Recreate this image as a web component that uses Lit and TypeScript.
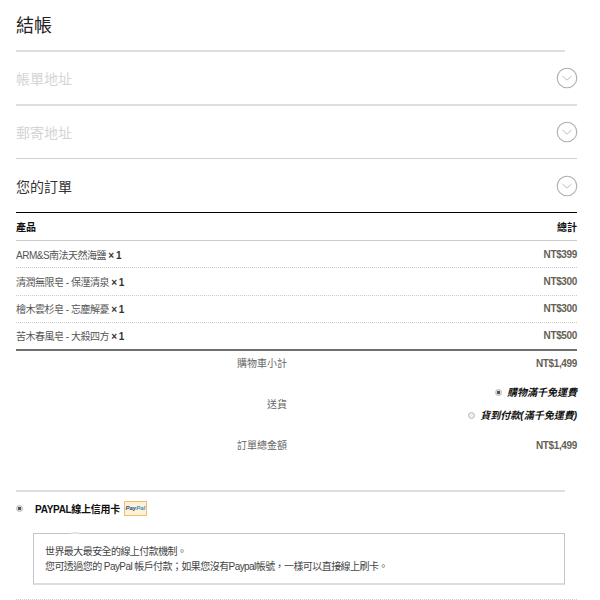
import { LitElement, html, css, svg } from "lit";
import { customElement } from "lit/decorators.js";

const chevron = html`<svg class="chev" width="22" height="22" viewBox="0 0 22 22" fill="none">
  <circle cx="11" cy="11" r="9.8" stroke="#adadad" stroke-width="1.1"></circle>
  ${svg`<path d="M6.4 9 L11 13.1 L15.6 9" stroke="#b5b5b5" stroke-width="0.9"></path>`}
</svg>`;

const items = [
  ["ARM&S南法天然海鹽", "NT$399"],
  ["清潤無限皂 - 保溼清泉", "NT$300"],
  ["檜木雲杉皂 - 忘塵解憂", "NT$300"],
  ["苦木春風皂 - 大殺四方", "NT$500"],
];

@customElement("app-root")
export class AppRoot extends LitElement {
  static styles = css`
    :host {
      display: block;
      width: 600px;
      height: 600px;
      overflow: hidden;
      background: #fff;
      font-family: "Liberation Sans", "Noto Sans CJK TC", sans-serif;
      color: #555;
    }
    .page { padding: 0 23px 0 16px; display: flex; flex-direction: column; }
    h1 { margin: 0; height: 50px; box-sizing: border-box; padding-top: 14px; font-size: 18px; line-height: 24px; font-weight: 400; color: #222; }
    .rule-short { height: 2px; background: #dedede; margin-right: 12px; }
    .sec { height: 52px; display: flex; align-items: center; justify-content: space-between; font-size: 14px; color: #d4d4d4; }
    .sec.on { height: 53px; color: #333; }
    .sec .chev { margin-right: -1px; }
    .rule { height: 2px; background: #dedede; }
    .rule.thin { height: 1px; background: #d0d0d0; }
    .head { border-top: 1px solid #000; border-bottom: 1px solid #ccc; height: 27px; display: flex; align-items: center; justify-content: space-between; font-size: 10px; font-weight: 700; color: #111; }
    .row { height: 26.3px; display: flex; align-items: center; justify-content: space-between; font-size: 10px; letter-spacing: -0.5px; color: #555; border-bottom: 1px dotted #ccc; }
    .row.last { border-bottom: 0; height: 26.1px; }
    .x { font-weight: 700; color: #333; }
    .price { font-weight: 700; color: #665f55; font-size: 10px; letter-spacing: -0.35px; }
    .thick { height: 2px; background: #6f6f6f; }
    .sum { display: grid; grid-template-columns: 271px 1fr; font-size: 10px; color: #666; }
    .sum .l { text-align: right; }
    .sum .r { text-align: right; }
    .s1 { margin-top: 6px; line-height: 13px; }
    .ship { align-items: center; margin-top: 16px; }
    .ship .r { display: flex; flex-direction: column; align-items: flex-end; gap: 10px; font-style: italic; font-weight: 700; color: #111; }
    .ship .opt { display: flex; align-items: center; gap: 5px; line-height: 13px; }
    .s3 { margin-top: 17px; line-height: 13px; }
    .radio { width: 7px; height: 7px; box-sizing: border-box; border-radius: 50%; border: 1px solid #bbb; background: #eee; flex: none; }
    .radio.sel { background: radial-gradient(circle, #555 0 1.6px, #ddd 2px); }
    .rule-pay { height: 2px; background: #dedede; margin: 38px 12px 0 0; }
    .pay { display: flex; align-items: center; height: 33px; font-size: 10px; letter-spacing: -0.3px; font-weight: 700; color: #111; }
    .pay .radio { margin-right: 12px; }
    .badge { margin-left: 4px; width: 23px; height: 15px; box-sizing: border-box; border: 1px solid #f0bd75; background: #fff2d4; display: flex; align-items: center; justify-content: center; font-size: 6px; letter-spacing: 0; font-style: italic; font-weight: 700; color: #1c4b93; }
    .badge b { color: #2f8fd0; }
    .box { position: relative; margin: 8px 12px 0 17px; height: 52px; box-sizing: border-box; border: 1px solid #c4c4c4; border-bottom: 2px solid #ddd; padding: 10px 11px; font-size: 10px; letter-spacing: -0.57px; line-height: 15.5px; color: #444; }
    .notch { position: absolute; left: 37px; top: -2px; width: 8px; height: 2px; background: #e4e4e4; border-radius: 2px 2px 0 0; }
    .end { margin-top: 14px; border-top: 1px dotted #ccc; }
  `;

  render() {
    return html`<div class="page">
      <h1>結帳</h1>
      <div class="rule-short"></div>
      <div class="sec"><span>帳單地址</span>${chevron}</div>
      <div class="rule"></div>
      <div class="sec"><span>郵寄地址</span>${chevron}</div>
      <div class="rule thin"></div>
      <div class="sec on"><span>您的訂單</span>${chevron}</div>
      <div class="head"><span>產品</span><span>總計</span></div>
      ${items.map(
        ([n, p], i) => html`<div class="row ${i === 3 ? "last" : ""}">
          <span>${n} <span class="x">× 1</span></span><span class="price">${p}</span>
        </div>`
      )}
      <div class="thick"></div>
      <div class="sum s1"><span class="l">購物車小計</span><span class="r price">NT$1,499</span></div>
      <div class="sum ship">
        <span class="l">送貨</span>
        <div class="r">
          <span class="opt"><i class="radio sel"></i>購物滿千免運費</span>
          <span class="opt"><i class="radio"></i>貨到付款(滿千免運費)</span>
        </div>
      </div>
      <div class="sum s3"><span class="l">訂單總金額</span><span class="r price">NT$1,499</span></div>
      <div class="rule-pay"></div>
      <div class="pay"><i class="radio sel"></i>PAYPAL線上信用卡<span class="badge">Pay<b>Pal</b></span></div>
      <div class="box">
        <i class="notch"></i>
        世界最大最安全的線上付款機制。<br />您可透過您的 PayPal 帳戶付款；如果您沒有Paypal帳號，一樣可以直接線上刷卡。
      </div>
      <div class="end"></div>
    </div>`;
  }
}
